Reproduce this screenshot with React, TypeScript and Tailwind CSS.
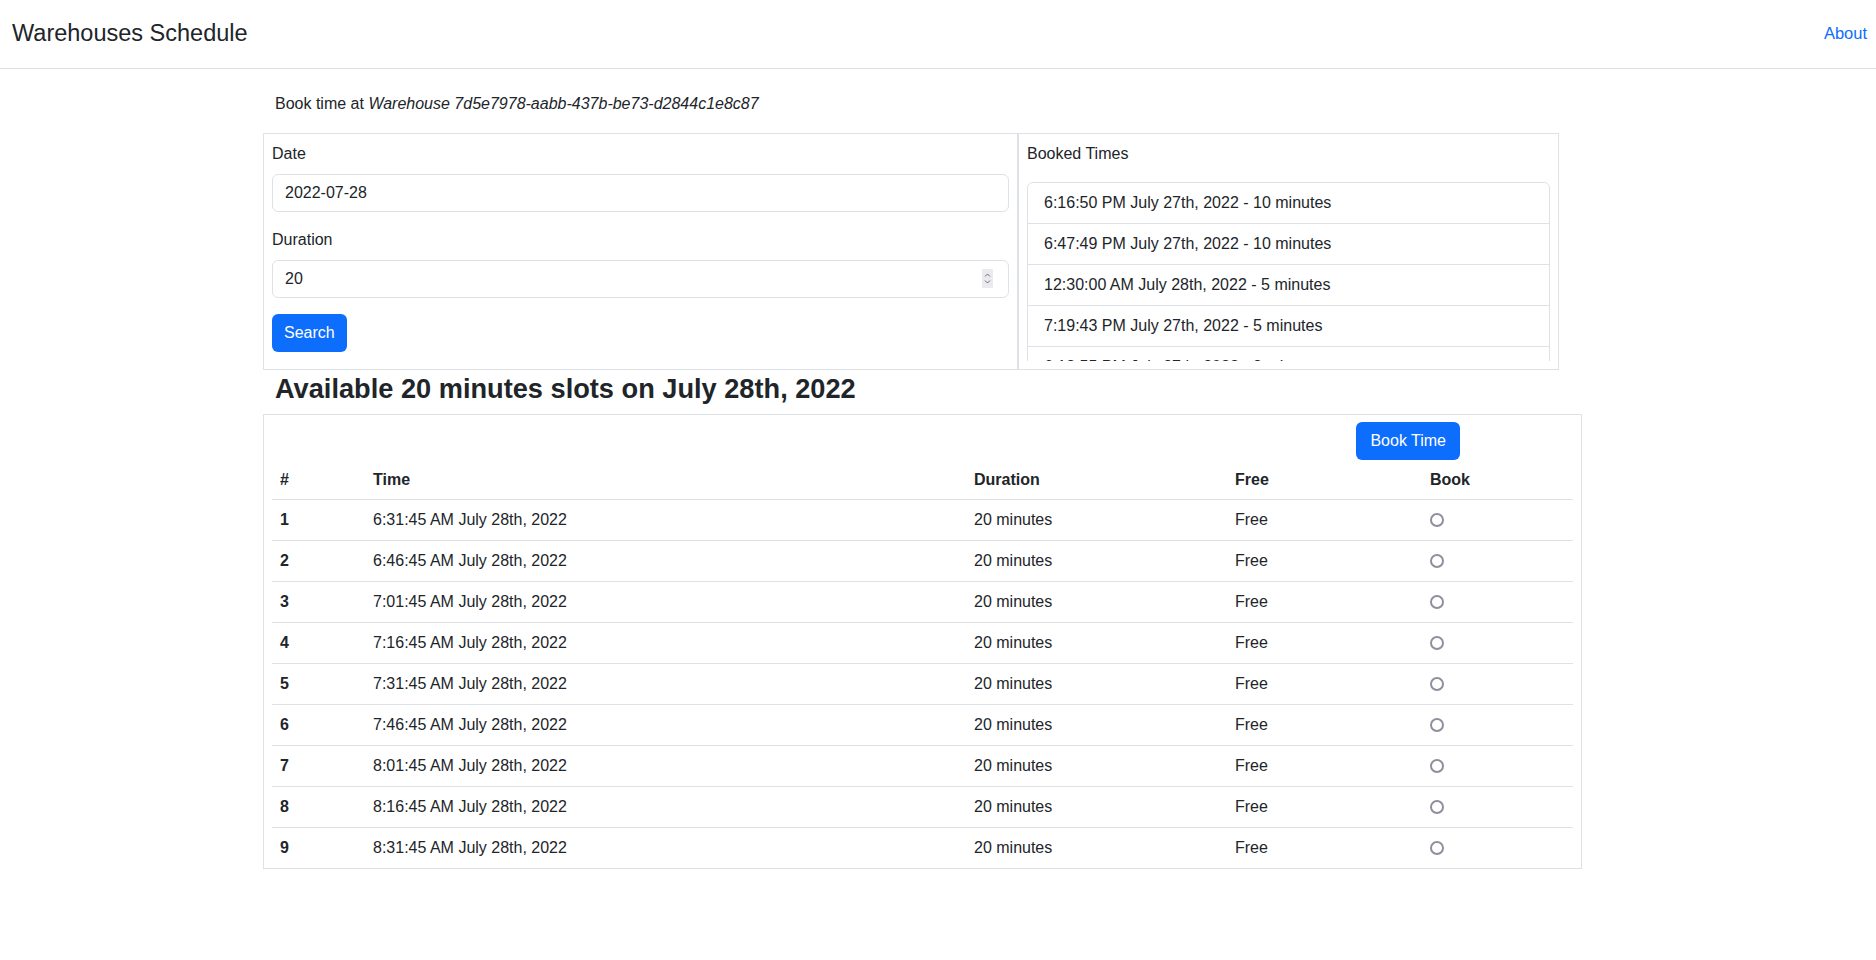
import React from "react";

const booked = [
  "6:16:50 PM July 27th, 2022 - 10 minutes",
  "6:47:49 PM July 27th, 2022 - 10 minutes",
  "12:30:00 AM July 28th, 2022 - 5 minutes",
  "7:19:43 PM July 27th, 2022 - 5 minutes",
  "6:18:55 PM July 27th, 2022 - 3 minutes",
  "9:02:10 PM July 27th, 2022 - 5 minutes",
];

const slots = [
  "6:31:45 AM July 28th, 2022",
  "6:46:45 AM July 28th, 2022",
  "7:01:45 AM July 28th, 2022",
  "7:16:45 AM July 28th, 2022",
  "7:31:45 AM July 28th, 2022",
  "7:46:45 AM July 28th, 2022",
  "8:01:45 AM July 28th, 2022",
  "8:16:45 AM July 28th, 2022",
  "8:31:45 AM July 28th, 2022",
];

export default function App() {
  return (
    <div className="min-h-screen bg-white font-['Liberation_Sans',Arial,sans-serif] text-base leading-6 text-[#212529]">
      <nav className="flex h-[69px] items-center justify-between border-b border-[#dee2e6] pb-0.5 pl-3 pr-[9px]">
        <span className="text-[23.5px] leading-8">Warehouses Schedule</span>
        <a href="#" className="text-[16.5px] text-[#0d6efd]">
          About
        </a>
      </nav>

      <main className="pl-[263px] pt-[23px]">
        <p className="pl-3">
          Book time at <i>Warehouse 7d5e7978-aabb-437b-be73-d2844c1e8c87</i>
        </p>

        <div className="mt-[17px] flex">
          {/* search form */}
          <div className="w-[755px] border border-[#dee2e6] p-2">
            <label className="mb-2 block">Date</label>
            <input
              type="text"
              defaultValue="2022-07-28"
              className="mb-4 block h-[38px] w-full rounded-md border border-[#dee2e6] px-3 outline-none"
            />
            <label className="mb-2 block">Duration</label>
            <div className="relative mb-4">
              <input
                type="text"
                defaultValue="20"
                className="block h-[38px] w-full rounded-md border border-[#dee2e6] px-3 outline-none"
              />
              {/* spinner like the browser's number field */}
              <span className="absolute right-[16px] top-[9px] flex h-[19px] w-[11px] items-center justify-center bg-[#ebebef]">
                <svg width="7" height="13" viewBox="0 0 7 13" fill="none" stroke="#6b6b73" strokeWidth="1">
                  <path d="M1 4.5 L3.5 2 L6 4.5" />
                  <path d="M1 8.5 L3.5 11 L6 8.5" />
                </svg>
              </span>
            </div>
            <button className="h-[38px] rounded-md bg-[#0d6efd] px-3 text-white">Search</button>
          </div>

          {/* booked list */}
          <div className="w-[541px] border border-[#dee2e6] p-2">
            <p className="mb-4">Booked Times</p>
            <div className="h-[179px] overflow-hidden">
              <ul className="rounded-t-md border border-[#dee2e6]">
                {booked.map((b, i) => (
                  <li
                    key={i}
                    className={i > 0 ? "border-t border-[#dee2e6] px-4 py-2" : "px-4 py-2"}
                  >
                    {b}
                  </li>
                ))}
              </ul>
            </div>
          </div>
        </div>

        <h3 className="mt-[2px] mb-2 pl-3 text-[27.2px] font-bold leading-[34px]">
          Available 20 minutes slots on July 28th, 2022
        </h3>

        <div className="w-[1319px] border border-[#dee2e6] px-2 pt-[7px]">
          <div className="flex justify-end pr-[113px]">
            <button className="h-[38px] rounded-md bg-[#0d6efd] px-[14px] text-white">Book Time</button>
          </div>
          <table className="w-full border-collapse text-left">
            <thead>
              <tr className="border-b border-[#dee2e6]">
                <th className="w-[93px] px-2 pt-2 pb-[7px] font-bold">#</th>
                <th className="w-[601px] px-2 pt-2 pb-[7px] font-bold">Time</th>
                <th className="w-[261px] px-2 pt-2 pb-[7px] font-bold">Duration</th>
                <th className="w-[195px] px-2 pt-2 pb-[7px] font-bold">Free</th>
                <th className="px-2 pt-2 pb-[7px] font-bold">Book</th>
              </tr>
            </thead>
            <tbody>
              {slots.map((t, i) => (
                <tr
                  key={t}
                  className={i < slots.length - 1 ? "border-b border-[#dee2e6]" : ""}
                >
                  <td className="p-2 font-bold">{i + 1}</td>
                  <td className="p-2">{t}</td>
                  <td className="p-2">20 minutes</td>
                  <td className="p-2">Free</td>
                  <td className="p-2">
                    <input
                      type="radio"
                      name="slot"
                      className="m-0 block h-[14px] w-[14px] appearance-none rounded-full border-2 border-[#8f8f9d] bg-white"
                    />
                  </td>
                </tr>
              ))}
            </tbody>
          </table>
        </div>
      </main>
    </div>
  );
}
